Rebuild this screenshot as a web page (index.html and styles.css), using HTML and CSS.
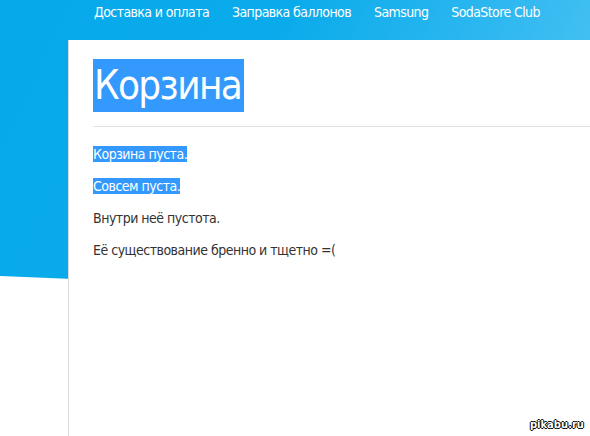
FILE: index.html
```
<!DOCTYPE html>
<html lang="ru">
<head>
    <meta charset="UTF-8">
    <title>Корзина</title>
    <link rel="stylesheet" href="styles.css">
</head>
<body>
<div class="site">
    <nav class="topnav">
        <a href="javascript:;">Доставка и оплата</a>
        <a href="javascript:;">Заправка баллонов</a>
        <a href="javascript:;">Samsung</a>
        <a href="javascript:;">SodaStore Club</a>
    </nav>
    <main class="card">
        <h1 class="card-title"><span class="sel">Корзина</span></h1>
        <div class="card-text">
            <p><span class="sel">Корзина пуста.</span></p>
            <p><span class="sel">Совсем пуста.</span></p>
            <p>Внутри неё пустота.</p>
            <p>Её существование бренно и тщетно =(</p>
        </div>
    </main>
    <span class="watermark">pikabu.ru</span>
</div>
</body>
</html>
```
FILE: styles.css
```
html, body {
    margin: 0;
    padding: 0;
    background: #fff;
}
.site {
    position: relative;
    width: 590px;
    height: 436px;
    overflow: hidden;
    font-family: "DejaVu Sans", sans-serif;
    font-stretch: condensed;
    display: flex;
    flex-direction: column;
}
/* blue backdrop with slanted bottom edge */
.site::before {
    content: "";
    position: absolute;
    left: 0;
    top: 0;
    width: 100%;
    height: 300px;
    background: linear-gradient(115deg, #06a9ea 0%, #0aabeb 40%, #2fb8f0 70%, #5ac8f5 100%);
    clip-path: polygon(0 0, 100% 0, 100% 100%, 0 276px);
    z-index: 0;
}
.topnav {
    position: relative;
    z-index: 1;
    height: 40px;
    display: flex;
    gap: 23px;
    padding-left: 94px;
    box-sizing: border-box;
    padding-top: 3px;
    white-space: nowrap;
}
.topnav a {
    color: #fff;
    text-decoration: none;
    font-size: 14px;
    letter-spacing: -0.6px;
    line-height: 18px;
}
.card {
    position: relative;
    z-index: 1;
    flex: 1;
    margin-left: 68px;
    background: #fff;
    border-left: 1px solid #dcdcdc;
    padding: 19px 0 0 24px;
}
.card-title {
    margin: 0;
    font-weight: normal;
    font-size: 40px;
    letter-spacing: -1.6px;
    line-height: 53px;
    color: #fff;
    border-bottom: 1px solid #e2e2e2;
    padding-bottom: 14px;
}
.card-title .sel {
    display: inline-block;
    padding: 0 3px 0 1px;
}
.sel {
    background: #3399fd;
    color: #fff;
}
.card-text {
    padding-top: 18px;
    color: #333;
    font-size: 14px;
    letter-spacing: -0.5px;
}
.card-text p {
    margin: 0 0 14px;
    line-height: 18px;
}
.watermark {
    position: absolute;
    right: 6px;
    bottom: 6px;
    z-index: 2;
    font-family: "DejaVu Sans", sans-serif;
    font-stretch: normal;
    font-size: 10px;
    font-weight: bold;
    color: #fff;
    text-shadow: 1px 0 #000, -1px 0 #000, 0 1px #000, 0 -1px #000;
}
```
